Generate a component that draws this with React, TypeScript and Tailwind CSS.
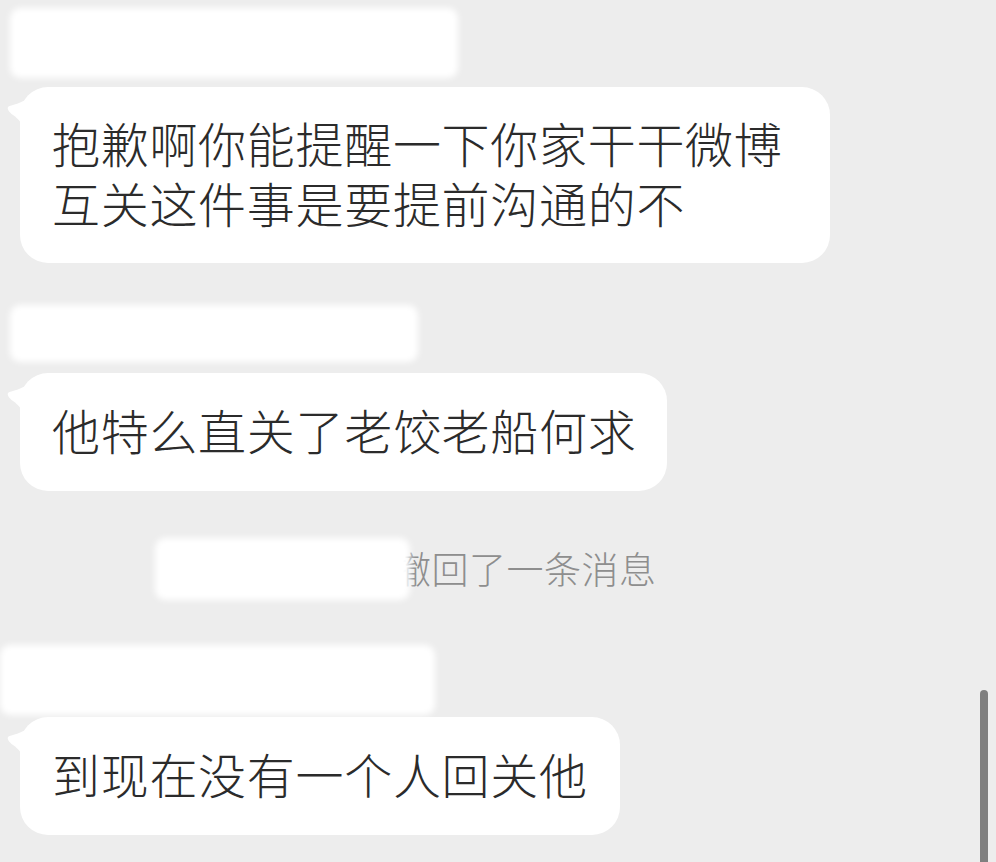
import React from "react";

const cjk = { fontFamily: '"Noto Sans CJK SC", "Noto Sans", sans-serif' };

function Redaction({ className }: { className: string }) {
  return <div className={`bg-white blur-[3px] rounded-[10px] ${className}`} />;
}

function Bubble({ lines, width, pad }: { lines: string[]; width: string; pad: string }) {
  return (
    <div className={`relative ml-[20px] ${width}`}>
      <svg className="absolute left-[-13px] top-[12px]" width="20" height="34" viewBox="0 0 20 34">
        <path d="M20 0 L20 34 C16 26 12 20 6 16 C2 13 0 10 1 8 C3 6 10 6 20 0 Z" fill="#ffffff" />
      </svg>
      <div className={`rounded-[28px] bg-white px-[32px] text-[48px] font-light leading-[60px] tracking-[0.7px] text-[#2b2b2b] ${pad}`}>
        {lines.map((line) => (
          <p key={line} className="whitespace-nowrap">
            {line}
          </p>
        ))}
      </div>
    </div>
  );
}

export default function App() {
  return (
    <div className="relative h-[862px] w-[996px] overflow-hidden bg-[#ededed]" style={cjk}>
      <div className="flex flex-col pt-[8px]">
        <Redaction className="ml-[10px] h-[70px] w-[448px]" />
        <div className="mt-[9px]">
          <Bubble width="w-[810px]" pad="pt-[25px] pb-[31px]" lines={["抱歉啊你能提醒一下你家干干微博", "互关这件事是要提前沟通的不"]} />
        </div>
        <Redaction className="ml-[10px] mt-[42px] h-[57px] w-[408px]" />
        <div className="mt-[11px]">
          <Bubble width="w-[647px]" pad="pt-[26px] pb-[32px]" lines={["他特么直关了老饺老船何求"]} />
        </div>
        <div className="mt-[47px] flex h-[62px] items-center pl-[155px]">
          <Redaction className="relative z-10 h-[62px] w-[255px]" />
          <span className="-ml-[16px] -mt-[3px] text-[37px] font-light leading-[40px] tracking-[0.5px] text-[#8e8e8e]">撤回了一条消息</span>
        </div>
        <Redaction className="mt-[45px] h-[70px] w-[435px]" />
        <div className="mt-[2px]">
          <Bubble width="w-[600px]" pad="pt-[26px] pb-[32px]" lines={["到现在没有一个人回关他"]} />
        </div>
      </div>
      {/* scroll indicator */}
      <div className="absolute bottom-0 right-[8px] h-[172px] w-[8px] rounded-t-full bg-[#7f7f7f]" />
    </div>
  );
}
